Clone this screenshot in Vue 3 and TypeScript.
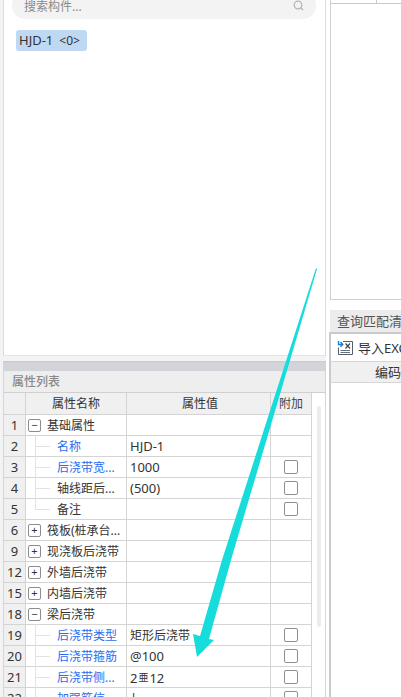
<script setup lang="ts">
interface Row {
  no: number
  name: string
  value?: string
  latin?: boolean
  kind: 'group' | 'item'
  open?: boolean
  blue?: boolean
  check?: boolean
  last?: boolean
  rebar?: boolean
}
const rows: Row[] = [
  { no: 1, name: '基础属性', kind: 'group', open: true },
  { no: 2, name: '名称', value: 'HJD-1', latin: true, kind: 'item', blue: true },
  { no: 3, name: '后浇带宽...', value: '1000', latin: true, kind: 'item', blue: true, check: true },
  { no: 4, name: '轴线距后...', value: '(500)', latin: true, kind: 'item', check: true },
  { no: 5, name: '备注', kind: 'item', check: true, last: true },
  { no: 6, name: '筏板(桩承台...', kind: 'group' },
  { no: 9, name: '现浇板后浇带', kind: 'group' },
  { no: 12, name: '外墙后浇带', kind: 'group' },
  { no: 15, name: '内墙后浇带', kind: 'group' },
  { no: 18, name: '梁后浇带', kind: 'group', open: true },
  { no: 19, name: '后浇带类型', value: '矩形后浇带', kind: 'item', blue: true, check: true },
  { no: 20, name: '后浇带箍筋', value: '@100', latin: true, kind: 'item', blue: true, check: true },
  { no: 21, name: '后浇带侧...', kind: 'item', latin: true, rebar: true, blue: true, check: true },
  { no: 22, name: '加强筋信', value: '|', latin: true, kind: 'item', blue: true, check: true }
]
</script>

<template>
  <div class="screen">
    <div class="left">
      <section class="browser">
        <div class="search">
          <span class="search-text">搜索构件...</span>
          <svg class="search-icon" width="11" height="11" viewBox="0 0 11 11" fill="none" stroke="#b5b5b5" stroke-width="1.3">
            <circle cx="5" cy="5" r="3.8" />
            <path d="M7.8 7.8 10 10" />
          </svg>
        </div>
        <div class="tag">HJD-1<small>&lt;0&gt;</small></div>
      </section>

      <section class="props">
        <div class="bar"></div>
        <div class="title">属性列表</div>
        <div class="body">
          <div class="table">
            <div class="tr head">
              <div class="no"></div>
              <div class="name">属性名称</div>
              <div class="val">属性值</div>
              <div class="add">附加</div>
            </div>
            <div v-for="r in rows" :key="r.no" class="tr">
              <div class="no">{{ r.no }}</div>
              <div class="name" :class="{ 'is-item': r.kind === 'item', blue: r.blue }">
                <span v-if="r.kind === 'group'" class="toggle">{{ r.open ? '−' : '+' }}</span>
                <span v-else class="tree" :class="{ last: r.last }"></span>
                <span class="label">{{ r.name }}</span>
              </div>
              <div class="val" :class="{ latin: r.latin }">
                <template v-if="r.rebar">2<span class="rebar">亜</span>12</template>
                <template v-else>{{ r.value }}</template>
              </div>
              <div class="add"><span v-if="r.check" class="box"></span></div>
            </div>
          </div>
          <div class="scroll"><div class="thumb"></div></div>
        </div>
      </section>
    </div>

    <div class="right">
      <section class="top-panel">
        <div class="top-row"><span></span></div>
      </section>
      <section class="query">
        <div class="query-title">查询匹配清单</div>
        <div class="query-box">
          <div class="tools">
            <svg class="tool-icon" width="17" height="16" viewBox="0 0 17 16" fill="none">
              <path d="M6 1.500h9.500v13H1.500v-7" stroke="#55606b" stroke-width="1" />
              <path d="M8.500 3.500 13 8.500M13 3.500 8.500 8.500" stroke="#444" stroke-width="1.200" />
              <path d="M3.500 10.500h9.500M3.500 12.500h9.500" stroke="#55606b" stroke-width="0.900" />
              <path d="M1.500 1v3.500h4M3.500 2 5.800 4.500 3.500 6.800" stroke="#1b7fd6" stroke-width="1.400" />
            </svg>
            <span>导入EXCEL文件</span>
          </div>
          <div class="code-head"><span>编码</span></div>
        </div>
      </section>
    </div>

    <svg class="arrow" width="401" height="697" viewBox="0 0 401 697">
      <polygon fill="#17dcdc" points="316,268 317,269 231,560 209,639 214,640 197,657 193,634 200,636 222,560" />
    </svg>
  </div>
</template>

<style>
html, body { margin: 0; background: #fff; }
</style>

<style scoped>
.screen {
  position: relative;
  width: 401px;
  height: 697px;
  overflow: hidden;
  display: flex;
  background: #fff;
  font-family: "Noto Sans", "Noto Sans CJK SC", sans-serif;
  font-size: 12px;
  color: #333;
}
.left {
  width: 326px;
  height: 697px;
  flex: none;
  display: flex;
  flex-direction: column;
  background: #f3f3f3;
  padding-left: 3px;
  box-sizing: border-box;
}
.browser {
  height: 356px;
  flex: none;
  overflow: hidden;
  background: #fff;
  border-left: 1px solid #dcdcdc;
  border-right: 1px solid #dcdcdc;
  border-bottom: 1px solid #e4e4e4;
  box-sizing: border-box;
  padding: 0 8px;
}
.search {
  margin-top: -8px;
  height: 27px;
  width: 304px;
  box-sizing: border-box;
  border-radius: 13px;
  background: #f3f3f3;
  display: flex;
  align-items: center;
  justify-content: space-between;
  padding: 0 12px;
}
.search-text { color: #8a8a8a; line-height: 27px; padding-top: 1px; }
.tag {
  margin-top: 11px;
  margin-left: 4px;
  width: 71px;
  height: 21px;
  box-sizing: border-box;
  background: #c0d9f3;
  border-radius: 3px;
  line-height: 21px;
  padding-left: 3px;
  color: #333;
  font-size: 13px;
  white-space: nowrap;
}
.tag small { font-size: 12px; margin-left: 6px; }
.props {
  margin-top: 5px;
  flex: 1;
  min-height: 0;
  display: flex;
  flex-direction: column;
  background: #fff;
}
.bar {
  height: 10px;
  box-sizing: border-box;
  background: #d3d4d9;
  border-top: 1px solid #c9cacf;
  flex: none;
}
.title {
  height: 22px;
  flex: none;
  box-sizing: border-box;
  background: #eeeeee;
  border-left: 1px solid #d6d6d6;
  border-right: 1px solid #d6d6d6;
  border-bottom: 1px solid #d0d0d0;
  padding-left: 8px;
  line-height: 21px;
  color: #8a8a8a;
  font-weight: 500;
}
.body {
  flex: 1;
  display: flex;
  min-height: 0;
  border-left: 1px solid #d6d6d6;
  border-right: 1px solid #d6d6d6;
}
.table { width: 308px; flex: none; }
.tr {
  display: grid;
  grid-template-columns: 22px 101px 144px 41px;
  height: 21px;
  box-sizing: border-box;
  border-bottom: 1px solid #d4d4d4;
  line-height: 21px;
  white-space: nowrap;
}
.tr.head { height: 22px; line-height: 22px; }
.tr > div { border-right: 1px solid #d4d4d4; box-sizing: border-box; height: 20px; }
.tr.head > div { height: 21px; background: #f0f0f0; text-align: center; }
.no { background: #f0f0f0; text-align: center; font-size: 13px; }
.head .add { color: #444; }
.name {
  display: flex;
  align-items: center;
  padding-left: 2px;
}
.head .name { display: block; padding-left: 0; }
.name.is-item { padding-left: 9px; }
.blue .label { color: #2b6cf0; }
.label { padding-top: 1px; }
.toggle {
  width: 11px;
  height: 11px;
  flex: none;
  border: 1px solid #8d8d8d;
  border-radius: 2px;
  margin-right: 6px;
  line-height: 10px;
  text-align: center;
  font-size: 11px;
  color: #333;
}
.tree {
  position: relative;
  width: 15px;
  height: 1px;
  flex: none;
  margin-right: 7px;
  background: #e2e2e2;
}
.tree::before {
  content: "";
  position: absolute;
  left: 0;
  top: -11px;
  height: 22px;
  width: 1px;
  background: #e2e2e2;
}
.tree.last::before { height: 11px; }
.val { padding-left: 3px; line-height: 22px; }
.val.latin { font-size: 13px; line-height: 20px; }
.rebar { font-size: 10px; vertical-align: 2px; margin: 0 1px; }
.add { display: flex; align-items: center; justify-content: center; }
.box {
  width: 12px;
  height: 12px;
  border: 1px solid #8f8f8f;
  border-radius: 2px;
  background: #fff;
}
.scroll { flex: 1; position: relative; }
.thumb {
  position: absolute;
  left: 5px;
  top: 13px;
  width: 4px;
  height: 221px;
  border-radius: 2px;
  background: #ececec;
}
.right {
  flex: 1;
  min-width: 0;
  padding-left: 4px;
  display: flex;
  flex-direction: column;
  background: #fff;
}
.top-panel {
  height: 300px;
  flex: none;
  box-sizing: border-box;
  border: 1px solid #cfcfcf;
  border-top: 0;
  border-right: 0;
}
.top-row { height: 3px; border-bottom: 1px solid #c8c8c8; display: flex; }
.top-row span { width: 45px; border-right: 1px solid #c8c8c8; }
.query {
  margin-top: 10px;
  flex: 1;
  display: flex;
  flex-direction: column;
  min-height: 0;
  font-size: 13px;
}
.query-title {
  height: 22px;
  flex: none;
  background: #ececec;
  padding-left: 7px;
  line-height: 22px;
  color: #555;
  white-space: nowrap;
  overflow: hidden;
}
.query-box {
  flex: 1;
  border-left: 2px solid #c9c9ce;
  border-top: 2px solid #c9c9ce;
  margin-left: -1px;
  display: flex;
  flex-direction: column;
}
.tools {
  height: 28px;
  flex: none;
  display: flex;
  align-items: center;
  gap: 4px;
  padding-left: 6px;
  white-space: nowrap;
  border-bottom: 1px solid #d6d6d6;
  box-sizing: border-box;
}
.tool-icon { flex: none; }
.code-head {
  height: 21px;
  flex: none;
  background: #f0f0f0;
  border-bottom: 1px solid #d6d6d6;
  box-sizing: border-box;
  line-height: 20px;
  padding-left: 44px;
  white-space: nowrap;
}
.arrow { position: absolute; left: 0; top: 0; pointer-events: none; }
</style>
